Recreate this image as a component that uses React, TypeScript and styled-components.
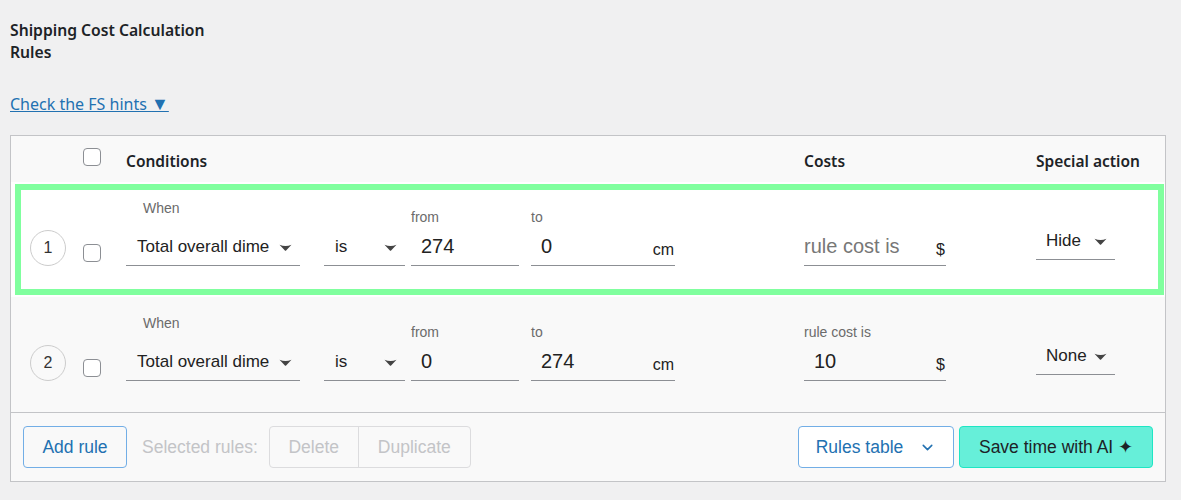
import React from 'react'
import styled, { createGlobalStyle } from 'styled-components'
import { ChevronDown } from 'lucide-react'

const GlobalStyle = createGlobalStyle`
    body {
        margin: 0;
        background: #f0f0f1;
        font-family: "Noto Sans", "Open Sans", sans-serif;
        color: #1d2327;
    }
`

const arial = `"Liberation Sans", Arial, sans-serif`

type Rule = {
    id: number
    from: string
    to: string
    cost: string
    action: string
    highlight?: boolean
}

const rules: Rule[] = [
    { id: 1, from: '274', to: '0', cost: '', action: 'Hide', highlight: true },
    { id: 2, from: '0', to: '274', cost: '10', action: 'None' },
]

const Caret = () => (
    <CaretSvg viewBox="0 0 12 7">
        <path d="M0 0.8 Q6 3.4 12 0.8 L6.6 6.4 Q6 7 5.4 6.4 Z" fill="#444" />
    </CaretSvg>
)

export default function App() {
    return (
        <>
            <GlobalStyle />
            <Page>
                <Title>Shipping Cost Calculation Rules</Title>
                <HintLink href="#">Check the FS hints <Arrow>▼</Arrow></HintLink>

                <Table>
                    <HeaderRow>
                        <LeadCell>
                            <Checkbox />
                        </LeadCell>
                        <HeadText>Conditions</HeadText>
                        <HeadText>Costs</HeadText>
                        <HeadText>Special action</HeadText>
                    </HeaderRow>

                    {rules.map(rule => (
                        <RuleRow key={rule.id} $highlight={rule.highlight}>
                            <LeadCell>
                                <Num>{rule.id}</Num>
                                <Checkbox />
                            </LeadCell>

                            <Conditions>
                                <Field $width={174} $gap={24}>
                                    <Label $indent={17} $space={14}>When</Label>
                                    <Control>
                                        <SelectText>Total overall dime</SelectText>
                                        <Caret />
                                    </Control>
                                </Field>
                                <Field $width={81} $gap={6}>
                                    <Control>
                                        <SelectText>is</SelectText>
                                        <Caret />
                                    </Control>
                                </Field>
                                <Field $width={108} $gap={12}>
                                    <Label>from</Label>
                                    <Control>
                                        <Value>{rule.from}</Value>
                                    </Control>
                                </Field>
                                <Field $width={144}>
                                    <Label>to</Label>
                                    <Control>
                                        <Value>{rule.to}</Value>
                                        <Suffix>cm</Suffix>
                                    </Control>
                                </Field>
                            </Conditions>

                            <Field $width={142}>
                                {rule.cost && <Label $indent={0}>rule cost is</Label>}
                                <Control>
                                    {rule.cost ? <Value>{rule.cost}</Value> : <Placeholder>rule cost is</Placeholder>}
                                    <Suffix>$</Suffix>
                                </Control>
                            </Field>

                            <Field $width={79} $lift={6}>
                                <Control>
                                    <SelectText $pad={10}>{rule.action}</SelectText>
                                    <Caret />
                                </Control>
                            </Field>
                        </RuleRow>
                    ))}

                    <Footer>
                        <FooterGroup>
                            <OutlineButton $width={104}>Add rule</OutlineButton>
                            <Muted>Selected rules:</Muted>
                            <ButtonGroup>
                                <GroupButton $width={88}>Delete</GroupButton>
                                <GroupButton $width={112}>Duplicate</GroupButton>
                            </ButtonGroup>
                        </FooterGroup>
                        <FooterGroup $gap={5}>
                            <OutlineButton $width={156} $white>
                                Rules table
                                <ChevronDown size={17} strokeWidth={2.2} />
                            </OutlineButton>
                            <AiButton>Save time with AI ✦</AiButton>
                        </FooterGroup>
                    </Footer>
                </Table>
            </Page>
        </>
    )
}

const Page = styled.div`
    padding: 19px 15px 18px 10px;
`

const Title = styled.h2`
    margin: 0;
    width: 205px;
    font-size: 15.7px;
    font-weight: 600;
    line-height: 22px;
`

const HintLink = styled.a`
    display: inline-block;
    margin-top: 29px;
    font-size: 16px;
    line-height: 24px;
    color: #2271b1;
    text-decoration: underline;
`

const Arrow = styled.span`
    font-size: 18px;
    line-height: 20px;
`

const Table = styled.div`
    margin-top: 19px;
    background: #f9f9f9;
    border: 1px solid #c3c4c7;
`

const grid = `
    display: grid;
    grid-template-columns: 115px 678px 232px 1fr;
`

const HeaderRow = styled.div`
    ${grid};
    height: 46px;
    align-items: center;
`

const HeadText = styled.div`
    font-size: 15.5px;
    font-weight: 600;
    padding-top: 3px;
`

const RuleRow = styled.div<{ $highlight?: boolean }>`
    ${grid};
    position: relative;
    align-items: end;
    height: 115px;
    box-sizing: border-box;
    padding: 18px 0 31px;
    background: ${p => (p.$highlight ? '#fff' : 'transparent')};

    &::after {
        content: '';
        display: ${p => (p.$highlight ? 'block' : 'none')};
        position: absolute;
        top: 2px;
        left: 4px;
        right: 1px;
        bottom: 2px;
        border: 6px solid #80ff9e;
        pointer-events: none;
    }
`

const LeadCell = styled.div`
    display: flex;
    align-items: flex-end;
    gap: 17px;
    padding-left: 72px;

    ${RuleRow} & {
        padding-left: 19px;
    }
`

const Num = styled.div`
    width: 34px;
    height: 34px;
    border: 1px solid #ccc;
    border-radius: 50%;
    display: flex;
    align-items: center;
    justify-content: center;
    font-family: ${arial};
    font-size: 16px;
    color: #333;
`

const Checkbox = styled.span`
    display: block;
    width: 16px;
    height: 16px;
    border: 1px solid #8c8f94;
    border-radius: 4px;
    background: #fff;
    margin-bottom: 4px;
`

const Conditions = styled.div`
    display: flex;
    align-items: flex-end;
`

const Field = styled.div<{ $width: number; $gap?: number; $lift?: number }>`
    display: flex;
    flex-direction: column;
    width: ${p => p.$width}px;
    margin-right: ${p => p.$gap ?? 0}px;
    margin-bottom: ${p => p.$lift ?? 0}px;
    font-family: ${arial};
`

const Label = styled.div<{ $indent?: number; $space?: number }>`
    font-size: 14px;
    line-height: 16px;
    color: #6b6b6b;
    padding-left: ${p => p.$indent ?? 0}px;
    margin-bottom: ${p => p.$space ?? 5}px;
`

const Control = styled.div`
    position: relative;
    display: flex;
    align-items: center;
    height: 36px;
    box-sizing: border-box;
    border-bottom: 1px solid #8c8f94;
`

const SelectText = styled.span<{ $pad?: number }>`
    flex: 1;
    padding-left: ${p => p.$pad ?? 11}px;
    padding-bottom: 2px;
    font-size: 17px;
    color: #222;
    white-space: nowrap;
    overflow: hidden;
`

const CaretSvg = styled.svg`
    width: 13px;
    height: 7px;
    margin: 0 8px 0 4px;
    flex-shrink: 0;
`

const Value = styled.span`
    flex: 1;
    padding-left: 10px;
    padding-bottom: 2px;
    font-size: 20px;
    color: #222;
`

const Placeholder = styled.span`
    flex: 1;
    padding-bottom: 2px;
    font-size: 20px;
    color: #777;
`

const Suffix = styled.span`
    font-size: 16px;
    color: #222;
    padding: 5px 1px 0 0;
`

const Footer = styled.div`
    display: flex;
    justify-content: space-between;
    align-items: center;
    padding: 13px 12px;
    border-top: 1px solid #c3c4c7;
    font-family: ${arial};
`

const FooterGroup = styled.div<{ $gap?: number }>`
    display: flex;
    align-items: center;
    gap: ${p => p.$gap ?? 0}px;
`

const OutlineButton = styled.button<{ $width: number; $white?: boolean }>`
    display: flex;
    align-items: center;
    justify-content: center;
    gap: 16px;
    width: ${p => p.$width}px;
    height: 42px;
    border: 1px solid #72aee6;
    border-radius: 4px;
    background: ${p => (p.$white ? '#fff' : '#f9f9f9')};
    color: #2271b1;
    font-family: ${arial};
    font-size: 17.5px;
    padding: 0;
`

const Muted = styled.span`
    margin: 0 11px 0 15px;
    font-size: 17.5px;
    color: #c3c4c7;
`

const ButtonGroup = styled.div`
    display: flex;
    border: 1px solid #dcdcde;
    border-radius: 4px;
    height: 40px;
`

const GroupButton = styled.button<{ $width: number }>`
    width: ${p => p.$width}px;
    border: none;
    background: transparent;
    color: #c3c4c7;
    font-family: ${arial};
    font-size: 17.5px;
    padding: 0;

    & + & {
        border-left: 1px solid #dcdcde;
    }
`

const AiButton = styled.button`
    width: 194px;
    height: 42px;
    border: 1px solid #1ee6c4;
    border-radius: 4px;
    background: #66efd9;
    color: #1d2327;
    font-family: ${arial};
    font-size: 17.5px;
    padding: 0;
`
